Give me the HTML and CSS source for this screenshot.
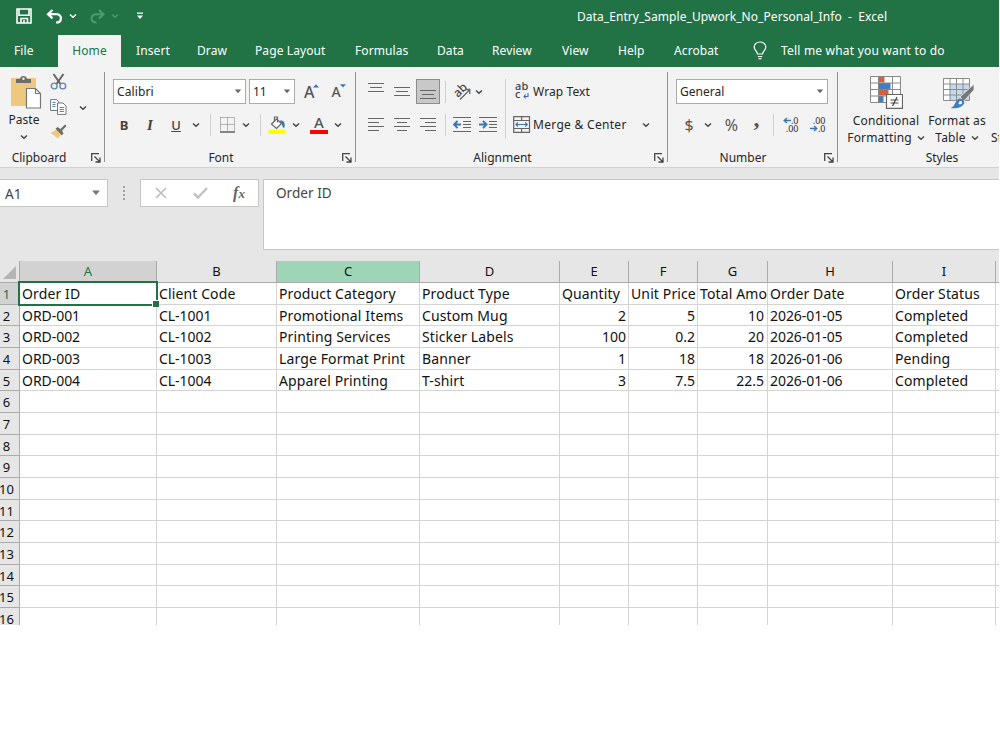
FILE: index.html
```html
<!doctype html>
<html lang="en">
  <head>
    <meta charset="UTF-8" />
    <meta name="viewport" content="width=device-width, initial-scale=1.0" />
    <title>Data_Entry_Sample_Upwork_No_Personal_Info - Excel</title>
    <link rel="stylesheet" href="styles.css">
  </head>
  <body>
    <svg class="defs" width="0" height="0">
      <symbol id="chev" viewBox="0 0 8 6"><path d="M1 1.500l3 2.700 3-2.700" fill="none" stroke="currentColor" stroke-width="1.500"/></symbol>
      <symbol id="caret" viewBox="0 0 8 5"><path d="M.8.500h6.400L4 4.300z" fill="currentColor"/></symbol>
      <symbol id="launcher" viewBox="0 0 10 10"><path d="M.7 8V.7H8M3.500 3.500l5 5M9 4.500V9H4.500" fill="none" stroke="#444" stroke-width="1.300"/></symbol>
    </svg>

    <div class="app">
      <header class="titlebar">
        <div class="quick">
          <svg width="16" height="16" viewBox="0 0 16 16" fill="none" stroke="#fff" stroke-width="1.600"><path d="M1 1h14v14H1zM3 1v6.300h10V1M5 15v-4.500h6.500V15M8 12v3"/></svg>
          <svg width="18" height="15" viewBox="0 0 18 15" fill="none" stroke="#fff" stroke-width="2.200"><path d="M6.500 1L2 5.200l4.500 4.200M2 5.200h8.500c6 0 6 8.300-.5 8.300"/></svg>
          <svg width="8" height="6"><use href="#chev"/></svg>
          <svg class="dim" width="18" height="15" viewBox="0 0 18 15" fill="none" stroke="currentColor" stroke-width="2"><path d="M11 1l4.500 4.200L11 9.400M15.500 5.200H8c-6 0-6 8.300.5 8.300"/></svg>
          <svg class="dim" width="8" height="6"><use href="#chev"/></svg>
          <svg width="8" height="8" viewBox="0 0 8 8" fill="#fff"><path d="M1 .5h6v1.300H1zM1 3.500h6L4 7z"/></svg>
        </div>
        <div class="doc-title">Data_Entry_Sample_Upwork_No_Personal_Info&nbsp; -&nbsp; Excel</div>
      </header>

      <nav class="tabs">
        <span class="file">File</span>
        <span class="active">Home</span>
        <span>Insert</span>
        <span>Draw</span>
        <span>Page Layout</span>
        <span>Formulas</span>
        <span>Data</span>
        <span>Review</span>
        <span>View</span>
        <span>Help</span>
        <span>Acrobat</span>
        <svg width="14" height="19" viewBox="0 0 14 19" fill="none" stroke="#fff" stroke-width="1.200"><path d="M4.500 13c0-2.500-3.300-3.500-3.300-7C1.200 3 3.800 1 7 1s5.800 2 5.800 5c0 3.500-3.300 4.500-3.300 7zM4.800 15.500h4.400M5.500 17.700h3"/></svg>
        <span class="tell">Tell me what you want to do</span>
      </nav>

      <section class="ribbon">
        <div class="group clipboard">
          <div class="body">
            <div class="paste">
              <svg width="32" height="34" viewBox="0 0 32 34"><path d="M1 3h25v28H1z" fill="#edc87e"/><path d="M6 8V4h4c0-4 7-4 7 0h4v4z" fill="#6d6d6d"/><circle cx="13.500" cy="3.800" r="1.200" fill="#f3f3f3"/><path d="M16.500 13.500h9l5 5V33h-14z" fill="#fff" stroke="#777" stroke-width="1.200"/><path d="M25.500 13.500v5h5" fill="none" stroke="#777" stroke-width="1.200"/></svg>
              <span>Paste</span>
              <svg width="8" height="6"><use href="#chev"/></svg>
            </div>
            <div class="clip-tools">
              <svg width="17" height="17" viewBox="0 0 17 17" fill="none"><path d="M3.500 1l7 10M13.500 1l-7 10" stroke="#666" stroke-width="2"/><circle cx="4.200" cy="13" r="2.900" stroke="#5f86ad" stroke-width="1.400"/><circle cx="12.800" cy="13" r="2.900" stroke="#5f86ad" stroke-width="1.400"/></svg>
              <svg width="17" height="16" viewBox="0 0 17 16" fill="#fff" stroke="#777"><path d="M.6.600h6l2 2v8.900h-8z"/><path d="M7.500 4h5.500l3 3v8.400H7.500z"/><path d="M2.500 3.500h3M2.500 5.500h3M2.500 7.500h3M9.500 8.500h4.500M9.500 10.500h4.500M9.500 12.500h4.500" stroke="#5a86b0"/></svg>
              <svg width="17" height="15" viewBox="0 0 17 15"><path d="M.5 9l6-3.500 4.500 5L8 14.500z" fill="#edc87e"/><path d="M5.500 4.800l2-1.800 3 2 4.500-4.500L16.500 2 12 6.700l1.500 3-1.800 1.600z" fill="#6d6d6d"/></svg>
            </div>
            <svg class="copy-chev" width="8" height="6"><use href="#chev"/></svg>
          </div>
          <div class="label">Clipboard</div>
          <svg class="launch" width="10" height="10"><use href="#launcher"/></svg>
        </div>

        <div class="group font">
          <div class="body">
            <div class="row font-top">
              <div class="combo family">Calibri<svg width="8" height="5"><use href="#caret"/></svg></div>
              <div class="combo size">11<svg width="8" height="5"><use href="#caret"/></svg></div>
              <div class="grow">A<svg width="6" height="4" viewBox="0 0 6 4"><path d="M0 3.500h6L3 .3z" fill="#3c76b0"/></svg></div>
              <div class="grow shrink">A<svg width="6" height="4" viewBox="0 0 6 4"><path d="M0 .3h6L3 3.500z" fill="#3c76b0"/></svg></div>
            </div>
            <div class="row font-bottom">
              <b class="fmt">B</b>
              <i class="fmt italic">I</i>
              <u class="fmt">U</u>
              <svg width="8" height="6"><use href="#chev"/></svg>
              <span class="sep"></span>
              <svg width="15" height="16" viewBox="0 0 15 16" fill="none" stroke="#777"><path d="M.5.500h14M.5 7.500h14M.5.500v14M7.500.500v14M14.500.500v14" stroke-dasharray="1 1"/><path d="M0 15h15" stroke="#555" stroke-width="1.400"/></svg>
              <svg width="8" height="6"><use href="#chev"/></svg>
              <span class="sep"></span>
              <svg width="18" height="18" viewBox="0 0 18 18"><path d="M3.500 8l5-5 5 4.500-5 5z" fill="#fff" stroke="#666" stroke-width="1.200"/><path d="M6.500 5V1h3v5.500" fill="none" stroke="#666" stroke-width="1.200"/><path d="M11.500 4.500c4-.5 6 2 5 7-1.500.5-2-.5-2.500-3z" fill="#3c76b0"/><path d="M.5 13.700h17V18H.5z" fill="#ff0"/></svg>
              <svg width="8" height="6"><use href="#chev"/></svg>
              <div class="font-color">A</div>
              <svg width="8" height="6"><use href="#chev"/></svg>
            </div>
          </div>
          <div class="label">Font</div>
          <svg class="launch" width="10" height="10"><use href="#launcher"/></svg>
        </div>

        <div class="group alignment">
          <div class="body">
            <div class="align-left">
              <div class="row align-row">
                <svg class="up" width="16" height="9" viewBox="0 0 16 9" stroke="#666"><path d="M0 .5h16M2 4.500h12M0 8.500h16"/></svg>
                <svg width="16" height="9" viewBox="0 0 16 9" stroke="#666"><path d="M0 .5h16M2 4.500h12M0 8.500h16"/></svg>
                <div class="pressed"><svg width="16" height="9" viewBox="0 0 16 9" stroke="#666"><path d="M0 .5h16M2 4.500h12M0 8.500h16"/></svg></div>
                <span class="sep"></span>
                <div class="orient"><span>ab</span><svg width="18" height="18" viewBox="0 0 18 18"><path d="M7 16.500L16.500 7M12 6.500h4.800V11" fill="none" stroke="#666" stroke-width="1.300"/></svg></div>
                <svg width="8" height="6"><use href="#chev"/></svg>
              </div>
              <div class="row align-row">
                <svg width="16" height="13" viewBox="0 0 16 13" stroke="#666"><path d="M0 .5h16M0 4.500h11M0 8.500h16M0 12.500h11"/></svg>
                <svg width="16" height="13" viewBox="0 0 16 13" stroke="#666"><path d="M0 .5h16M3 4.500h10M0 8.500h16M3 12.500h10"/></svg>
                <svg width="16" height="13" viewBox="0 0 16 13" stroke="#666"><path d="M0 .5h16M5 4.500h11M0 8.500h16M5 12.500h11"/></svg>
                <span class="sep"></span>
                <svg width="18" height="15" viewBox="0 0 18 15" fill="none" stroke="#666"><path d="M0 .5h18M10 4.500h8M10 7.500h8M10 10.500h8M0 14.500h18"/><path d="M8 7.500H1.500M4.500 4L1 7.500 4.500 11" stroke="#3c76b0" stroke-width="1.900"/></svg>
                <svg width="18" height="15" viewBox="0 0 18 15" fill="none" stroke="#666"><path d="M0 .5h18M10 4.500h8M10 7.500h8M10 10.500h8M0 14.500h18"/><path d="M0 7.500h6.500M4 4l3.500 3.500L4 11" stroke="#3c76b0" stroke-width="1.900"/></svg>
              </div>
            </div>
            <div class="align-right">
              <div class="row text-btn">
                <div class="wrap-icon">
                  <span>ab</span>
                  <span>c<svg width="6" height="6" viewBox="0 0 6 6"><path d="M5 0v3.500H1M2.800 1.500L1 3.500l1.800 2" fill="none" stroke="#3c66b0" stroke-width="1.100"/></svg></span>
                </div>
                <span>Wrap Text</span>
              </div>
              <div class="row text-btn">
                <svg width="18" height="17" viewBox="0 0 18 17" fill="none" stroke="#666"><path d="M.7.700h15.800v15.600H.7zM.7 4.500h15.800M.7 12.500h15.800M8.600.700v3.800M8.600 12.500v3.800" stroke-width="1.200"/><path d="M2.500 8.500h12.200M5 6.500l-2 2 2 2M12.200 6.500l2 2-2 2" stroke="#3c76b0" stroke-width="1.200"/></svg>
                <span class="merge">Merge &amp; Center</span>
                <svg class="merge-chev" width="8" height="6"><use href="#chev"/></svg>
              </div>
            </div>
          </div>
          <div class="label">Alignment</div>
          <svg class="launch" width="10" height="10"><use href="#launcher"/></svg>
        </div>

        <div class="group number">
          <div class="body">
            <div class="row">
              <div class="combo general">General<svg width="8" height="5"><use href="#caret"/></svg></div>
            </div>
            <div class="row number-row">
              <span class="symbol">$</span>
              <svg width="8" height="6"><use href="#chev"/></svg>
              <span class="symbol">%</span>
              <span class="symbol comma">,</span>
              <span class="sep"></span>
              <div class="dec">
                <span><svg width="8" height="7" viewBox="0 0 8 7"><path d="M8 3.500H1.500M4 1L1.200 3.500 4 6" fill="none" stroke="#3c76b0" stroke-width="1.400"/></svg>.0</span>
                <span>.00</span>
              </div>
              <div class="dec">
                <span>.00</span>
                <span><svg width="8" height="7" viewBox="0 0 8 7"><path d="M0 3.500h6.500M4 1l2.800 2.500L4 6" fill="none" stroke="#3c76b0" stroke-width="1.400"/></svg>.0</span>
              </div>
            </div>
          </div>
          <div class="label">Number</div>
          <svg class="launch" width="10" height="10"><use href="#launcher"/></svg>
        </div>

        <div class="group styles">
          <div class="body">
            <div class="big cond">
              <svg width="34" height="34" viewBox="0 0 34 34"><path d="M1.500 1.500h30v26h-30z" fill="#fff"/><path d="M9.500 1.500h6v6h-6zM9.500 14.500h10v6h-10z" fill="#d9603a"/><path d="M9.500 8h12v6h-12zM9.500 21h5v6.500h-5z" fill="#3f7fc0"/><path d="M1.500 1.500h30v26h-30zM1.500 8h30M1.500 14.500h30M1.500 21h30M9.500 1.500v26M23.500 1.500v26" fill="none" stroke="#888"/><path d="M17.500 19.500h16v13.800h-16z" fill="#fff" stroke="#666" stroke-width="1.200"/><path d="M21.500 25h8M21.500 28h8M28 22l-4.500 9" fill="none" stroke="#444" stroke-width="1.200"/></svg>
              <span class="line">Conditional</span>
              <span class="line">Formatting <svg width="8" height="6"><use href="#chev"/></svg></span>
            </div>
            <div class="big table-btn">
              <svg width="34" height="34" viewBox="0 0 34 34"><path d="M2.500 3.500h26v22h-26z" fill="#fff"/><path d="M9 9h19.500v16.500H9z" fill="#c3d9ef"/><path d="M2.500 3.500h26v22h-26zM2.500 9h26M2.500 14.500h26M2.500 20h26M9 3.500v22M15.500 3.500v22M22 3.500v22" fill="none" stroke="#8b8b8b"/><path d="M33 9v6l-10 11-4-4z" fill="#777" stroke="#f3f3f3" stroke-width=".8"/><path d="M9.500 33c5-1 4-8 9-9.500 4 0 6 3 4 6-3 4-8 4-13 3.500z" fill="#3f7fc0"/><path d="M18 27c1-1.500 3-1.500 3 .5s-2 2-3.500 1.500z" fill="#fff"/></svg>
              <span class="line">Format as</span>
              <span class="line">Table <svg width="8" height="6"><use href="#chev"/></svg></span>
            </div>
            <span class="line cut">Styles</span>
          </div>
          <div class="label">Styles</div>
        </div>
      </section>

      <section class="formula-area">
        <div class="name-box">A1<svg width="10" height="6"><use href="#caret"/></svg></div>
        <div class="dots"><i></i><i></i><i></i><i></i></div>
        <div class="fx-box">
          <svg width="12" height="12" viewBox="0 0 12 12" fill="none" stroke="#bdbdbd" stroke-width="1.700"><path d="M1 1l10 10M11 1L1 11"/></svg>
          <svg width="15" height="12" viewBox="0 0 15 12" fill="none" stroke="#c2c2c2" stroke-width="2.500"><path d="M1 6.500l4 4L14 1"/></svg>
          <span class="fx">f<small>x</small></span>
        </div>
        <div class="formula">Order ID</div>
      </section>

      <main class="sheet" id="sheet"></main>
    </div>

    <script>
      const columns = ["A", "B", "C", "D", "E", "F", "G", "H", "I", ""];
      const rows = [
        ["Order ID", "Client Code", "Product Category", "Product Type", "Quantity", "Unit Price", "Total Amount", "Order Date", "Order Status"],
        ["ORD-001", "CL-1001", "Promotional Items", "Custom Mug", 2, 5, 10, "2026-01-05", "Completed"],
        ["ORD-002", "CL-1002", "Printing Services", "Sticker Labels", 100, 0.2, 20, "2026-01-05", "Completed"],
        ["ORD-003", "CL-1003", "Large Format Print", "Banner", 1, 18, 18, "2026-01-06", "Pending"],
        ["ORD-004", "CL-1004", "Apparel Printing", "T-shirt", 3, 7.5, 22.5, "2026-01-06", "Completed"],
      ];
      const rowCount = 16;
      const sheet = document.getElementById("sheet");

      function addCell(className, text) {
        const cell = document.createElement("div");
        cell.className = className;
        cell.textContent = text;
        sheet.appendChild(cell);
      }

      addCell("corner", "");
      columns.forEach((name) => {
        let cls = "col-head";
        if (name === "A") cls += " selected";
        if (name === "C") cls += " hovered";
        if (name === "") cls += " last";
        addCell(cls, name);
      });

      for (let r = 0; r < rowCount; r++) {
        addCell(r === 0 ? "row-head selected" : "row-head", r + 1);
        columns.forEach((name, c) => {
          const value = rows[r] && rows[r][c] !== undefined ? rows[r][c] : "";
          let cls = "cell";
          if (typeof value === "number") cls += " num";
          else if (/\d/.test(value)) cls += " code";
          if (name === "G") cls += " total";
          if (name === "") cls += " last";
          if (r === 0 && c === 0) cls += " current";
          addCell(cls, value);
        });
      }
    </script>
  </body>
</html>
```
FILE: styles.css
```css
* {
  margin: 0;
  padding: 0;
  box-sizing: border-box;
}

body {
  font-family: "Noto Sans", "Open Sans", sans-serif;
  font-size: 12px;
  color: #262626;
  background: #fff;
  overflow: hidden;
}

svg {
  display: block;
  flex-shrink: 0;
}

.defs {
  position: absolute;
}

.app {
  width: 999px;
  height: 625px;
  overflow: hidden;
}

/* title bar */
.titlebar {
  display: flex;
  height: 34px;
  background: #217346;
  color: #fff;
}

.quick {
  display: grid;
  grid-template-columns: 47px 16px 20px 28px 8px 41px;
  align-items: center;
  justify-items: center;
  width: 577px;
  height: 32px;
}

.dim {
  color: #4f9a70;
}

.doc-title {
  line-height: 34px;
  letter-spacing: 0.06px;
  white-space: nowrap;
}

.tabs {
  display: grid;
  grid-template-columns: 58px 78px 61px 58px 100px 82px 55px 70px 56px 56px 79px 28px 1fr;
  align-items: center;
  height: 33px;
  background: #217346;
  color: #fff;
  letter-spacing: 0.1px;
  white-space: nowrap;
}

.tabs .file {
  padding-left: 14px;
}

.tabs .active {
  width: 63px;
  height: 32px;
  align-self: end;
  line-height: 32px;
  text-align: center;
  background: #f3f3f3;
  color: #217346;
}

.tabs .tell {
  letter-spacing: 0.2px;
}

/* ribbon */
.ribbon {
  display: flex;
  height: 101px;
  background: #f3f3f3;
  border-bottom: 1px solid #d2d2d2;
  color: #262626;
}

.group {
  position: relative;
  display: flex;
  flex-direction: column;
  flex-shrink: 0;
  height: 90px;
  margin-top: 5px;
  border-right: 1px solid #8f8f8f;
}

.group svg {
  color: #444;
}

.clipboard {
  width: 105px;
}

.font {
  width: 251px;
}

.alignment {
  width: 312px;
}

.number {
  width: 170px;
}

.styles {
  width: 161px;
  height: 95px;
  border-right: none;
  overflow: hidden;
}

.body {
  flex: none;
  height: 77px;
}

.label {
  flex: none;
  line-height: 18px;
  text-align: center;
}

.clipboard .label {
  padding-right: 26px;
}

.font .label,
.alignment .label {
  padding-right: 18px;
}

.number .label {
  padding-right: 19px;
}

.styles .label {
  padding-left: 47px;
}

.launch {
  position: absolute;
  right: 3px;
  bottom: -1px;
}

.row {
  display: flex;
  align-items: center;
  height: 25px;
}

.row + .row {
  margin-top: 8px;
}

.clipboard .body {
  display: flex;
}

.paste {
  display: flex;
  flex-direction: column;
  align-items: center;
  width: 48px;
  padding-top: 3px;
}

.paste svg:first-child {
  margin-left: 3px;
}

.paste span {
  line-height: 18px;
  margin: 2px 0 5px;
}

.clip-tools {
  display: flex;
  flex-direction: column;
  gap: 9px;
  width: 26px;
  padding: 1px 0 0 2px;
}

.copy-chev {
  margin: 33px 0 0 5px;
}

.font .body,
.alignment .body,
.number .body {
  padding-top: 7px;
}

.font .body {
  padding-left: 8px;
}

.combo {
  display: flex;
  align-items: center;
  justify-content: space-between;
  height: 25px;
  padding: 0 3px 1px;
  background: #fff;
  border: 1px solid #ababab;
}

.combo svg {
  color: #666;
}

.family {
  width: 133px;
  letter-spacing: 0.1px;
}

.size {
  width: 46px;
  margin-left: 3px;
}

.grow {
  display: flex;
  margin-left: 9px;
  font-size: 16px;
  font-weight: 500;
  line-height: 20px;
  color: #555;
}

.grow svg {
  margin: 2px 0 0 -1px;
}

.shrink {
  margin-left: 12px;
  font-size: 14px;
}

.font-bottom {
  display: grid;
  grid-template-columns: 24px 28px 24px 16px 12px 22px 16px 12px 22px 16px 30px 8px;
  justify-items: center;
  margin-left: -1px;
}

.fmt {
  font-size: 13px;
  font-weight: 500;
  line-height: 18px;
  color: #444;
}

b.fmt {
  font-weight: bold;
}

.italic {
  font-family: "Liberation Serif", serif;
  font-size: 15px;
  font-weight: bold;
}

.sep {
  width: 1px;
  height: 22px;
  background: #d0d0d0;
}

.font-color {
  width: 18px;
  height: 18px;
  border-bottom: 4px solid #f00;
  font-size: 15px;
  font-weight: 500;
  line-height: 13px;
  text-align: center;
  color: #555;
}

.alignment .body {
  display: flex;
}

.align-left {
  width: 150px;
  height: 60px;
  padding-left: 7px;
  border-right: 1px solid #d0d0d0;
}

.align-row {
  display: grid;
  grid-template-columns: 26px 26px 26px 9px 24px 28px;
  justify-items: center;
}

.align-row:first-child {
  grid-template-columns: 26px 26px 26px 9px 24px 10px;
}

.up {
  margin-bottom: 8px;
}

.pressed {
  display: flex;
  align-items: flex-end;
  justify-content: center;
  width: 24px;
  height: 25px;
  padding-bottom: 4px;
  background: #c8c8c8;
  border: 1px solid #8c8c8c;
}

.orient {
  position: relative;
  width: 18px;
  height: 18px;
}

.orient span {
  position: absolute;
  left: 0;
  top: 0;
  font-size: 12px;
  font-weight: 500;
  line-height: 14px;
  color: #444;
  transform: rotate(-45deg);
}

.orient svg {
  position: relative;
}

.wrap-icon {
  display: flex;
  flex-direction: column;
  width: 18px;
  padding: 0 0 3px 2px;
  font-size: 11px;
  font-weight: 500;
  line-height: 8px;
  color: #444;
}

.wrap-icon span {
  display: flex;
  align-items: center;
  height: 8px;
}

.wrap-icon svg {
  margin: 4px 0 0 2px;
}

.text-btn {
  padding-left: 7px;
  gap: 2px;
  line-height: 18px;
  letter-spacing: 0.1px;
  white-space: nowrap;
}

.merge {
  letter-spacing: 0.3px;
}

.merge-chev {
  margin-left: 13px;
}

.number .body {
  padding-left: 8px;
}

.general {
  width: 152px;
}

.number-row {
  display: grid;
  grid-template-columns: 22px 15px 33px 17px 16px 18px 36px;
  justify-items: center;
  margin-left: 2px;
}

.symbol {
  font-size: 16px;
  line-height: 22px;
  color: #555;
}

.comma {
  font-family: "Liberation Serif", serif;
  font-size: 24px;
  font-weight: bold;
  margin-top: -13px;
}

.dec {
  display: flex;
  flex-direction: column;
  align-items: flex-end;
  width: 17px;
  font-size: 9px;
  font-weight: 500;
  line-height: 8px;
  color: #444;
}

.dec span {
  display: flex;
  align-items: center;
}

.styles .body {
  display: flex;
}

.big {
  display: flex;
  flex: none;
  flex-direction: column;
  align-items: center;
  padding-top: 3px;
}

.cond {
  width: 76px;
  margin-left: 10px;
}

.table-btn {
  width: 66px;
}

.table-btn > svg {
  margin-left: 2px;
}

.line {
  display: flex;
  align-items: center;
  gap: 5px;
  line-height: 17px;
  letter-spacing: 0.15px;
  white-space: nowrap;
}

.big svg + .line {
  margin-top: 3px;
}

.cut {
  margin: 57px 0 0 1px;
  height: 17px;
}

/* formula bar */
.formula-area {
  display: flex;
  height: 93px;
  padding-top: 11px;
  background: #e6e6e6;
  color: #444;
  font-size: 13.600px;
}

.name-box {
  display: flex;
  align-items: center;
  justify-content: space-between;
  width: 108px;
  height: 28px;
  padding: 0 6px 0 5px;
  background: #fff;
  border: 1px solid #c6c6c6;
  border-left: none;
}

.name-box svg {
  color: #777;
}

.dots {
  display: flex;
  flex-direction: column;
  gap: 2px;
  width: 32px;
  padding: 7px 0 0 15px;
}

.dots i {
  width: 2px;
  height: 2px;
  background: #a0a0a0;
}

.fx-box {
  display: grid;
  grid-template-columns: 40px 39px 38px;
  align-items: center;
  justify-items: center;
  width: 119px;
  height: 28px;
  background: #fff;
  border: 1px solid #c6c6c6;
}

.fx {
  font-family: "Liberation Serif", serif;
  font-size: 16px;
  font-style: italic;
  font-weight: bold;
  line-height: 20px;
  color: #666;
}

.fx small {
  font-size: 13px;
}

.formula {
  flex: 1;
  height: 71px;
  margin-left: 4px;
  padding: 4px 12px;
  line-height: 18px;
  background: #fff;
  border: 1px solid #c6c6c6;
  border-right: none;
}

/* grid */
.sheet {
  display: grid;
  grid-template-columns: 20px 137px 120px 143px 140px 69px 69px 70px 125px 103px 3px;
  grid-template-rows: 22px;
  grid-auto-rows: 21.68px;
  font-size: 14px;
  color: #111;
}

.corner,
.col-head,
.row-head {
  background: #e6e6e6;
  border-right: 1px solid #ababab;
  border-bottom: 1px solid #ababab;
}

.corner {
  display: flex;
  padding: 5px 0 0 3px;
}

.corner::before {
  content: "";
  width: 13px;
  height: 13px;
  background: #b4b4b4;
  clip-path: polygon(100% 0, 100% 100%, 0 100%);
}

.col-head {
  font-size: 13px;
  line-height: 21px;
  text-align: center;
}

.row-head {
  display: flex;
  justify-content: center;
  padding-right: 6px;
  font-size: 13px;
  line-height: 22px;
}

.selected {
  background: #d2d2d2;
  color: #217346;
}

.hovered {
  background: #9fd5b7;
}

.cell {
  padding: 0 2px;
  line-height: 21px;
  letter-spacing: 0.12px;
  white-space: nowrap;
  overflow: hidden;
  border-right: 1px solid #d4d4d4;
  border-bottom: 1px solid #d4d4d4;
}

.code {
  letter-spacing: -0.05px;
}

.num {
  text-align: right;
  letter-spacing: 0;
}

.num.total {
  padding-right: 3px;
}

.last {
  padding: 0;
  border-right: none;
}

.current {
  position: relative;
  overflow: visible;
}

/* selection frame and its fill handle */
.current::before {
  content: "";
  position: absolute;
  inset: -2px -2px -2px -2px;
  border: 2px solid #217346;
}

.current::after {
  content: "";
  position: absolute;
  right: -3px;
  bottom: -3px;
  width: 6px;
  height: 6px;
  background: #217346;
  border: 1px solid #fff;
  border-right: none;
  border-bottom: none;
}
```
